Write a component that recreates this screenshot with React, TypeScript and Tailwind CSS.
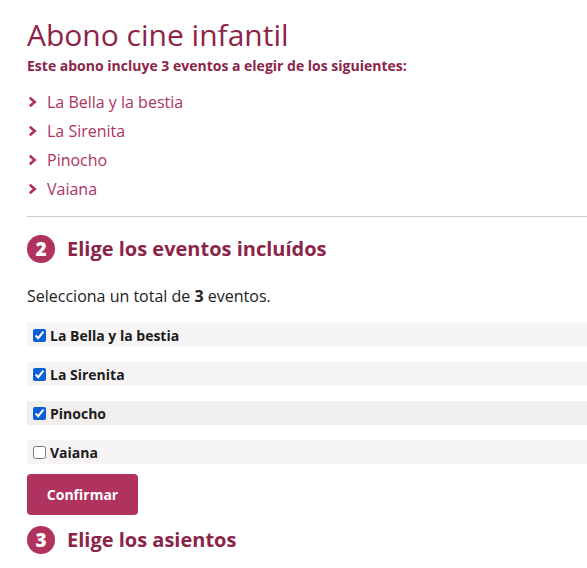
import React, { useState } from 'react';

const events = ['La Bella y la bestia', 'La Sirenita', 'Pinocho', 'Vaiana'];

const StepTitle: React.FC<{ n: number; title: string }> = ({ n, title }) => (
  <h2 className="flex items-center gap-[12px] text-[20px] font-bold text-[#8c2449] leading-[28px]">
    <span className="flex h-[28px] w-[28px] shrink-0 items-center justify-center rounded-full bg-[#b0325e] text-[19px] font-extrabold text-white">
      {n}
    </span>
    {title}
  </h2>
);

export default function App() {
  const [checked, setChecked] = useState<boolean[]>([true, true, true, false]);

  const toggle = (i: number) => {
    setChecked((prev) => prev.map((c, j) => (j === i ? !c : c)));
  };

  return (
    <div className="min-h-screen bg-white pl-[27px] pt-[16px] font-['Open_Sans',sans-serif] text-[#222]">
      <h1 className="text-[30px] leading-[38px] text-[#8c2449]">Abono cine infantil</h1>
      <p className="mt-[1px] text-[14px] font-bold text-[#8c2449]">
        Este abono incluye 3 eventos a elegir de los siguientes:
      </p>

      <ul className="mt-[15px] flex flex-col gap-[7px]">
        {events.map((e) => (
          <li key={e} className="flex items-center gap-[10px] text-[16px] leading-[22px] text-[#b0325e]">
            <svg width="9" height="12" viewBox="0 0 9 12" className="ml-[1px]">
              <path d="M1.8 1.8 L6.6 6 L1.8 10.2" fill="none" stroke="#b0325e" strokeWidth="2.7" />
            </svg>
            {e}
          </li>
        ))}
      </ul>

      <hr className="mt-[16px] border-t border-[#cccccc]" />

      <div className="mt-[18px]">
        <StepTitle n={2} title="Elige los eventos incluídos" />
      </div>

      <p className="mt-[22px] text-[16px] leading-[22px]">
        Selecciona un total de <strong>3</strong> eventos.
      </p>

      <div className="mt-[16px] flex flex-col gap-[15px]">
        {events.map((e, i) => (
          <label
            key={e}
            className={`flex h-[24px] cursor-pointer items-center gap-[4px] pl-[6px] text-[14px] font-bold text-[#1c1c1c] ${
              i === 2 ? 'bg-[#f1efee]' : 'bg-[#f6f4f5]'
            }`}
          >
            <input
              type="checkbox"
              checked={checked[i]}
              onChange={() => toggle(i)}
              className="m-0 h-[13px] w-[13px] accent-[#0b5fd6]"
            />
            {e}
          </label>
        ))}
      </div>

      <button className="mt-[10px] h-[41px] w-[111px] rounded-[4px] bg-[#b0325e] text-[14px] font-bold text-white">
        Confirmar
      </button>

      <div className="mt-[11px]">
        <StepTitle n={3} title="Elige los asientos" />
      </div>
    </div>
  );
}
